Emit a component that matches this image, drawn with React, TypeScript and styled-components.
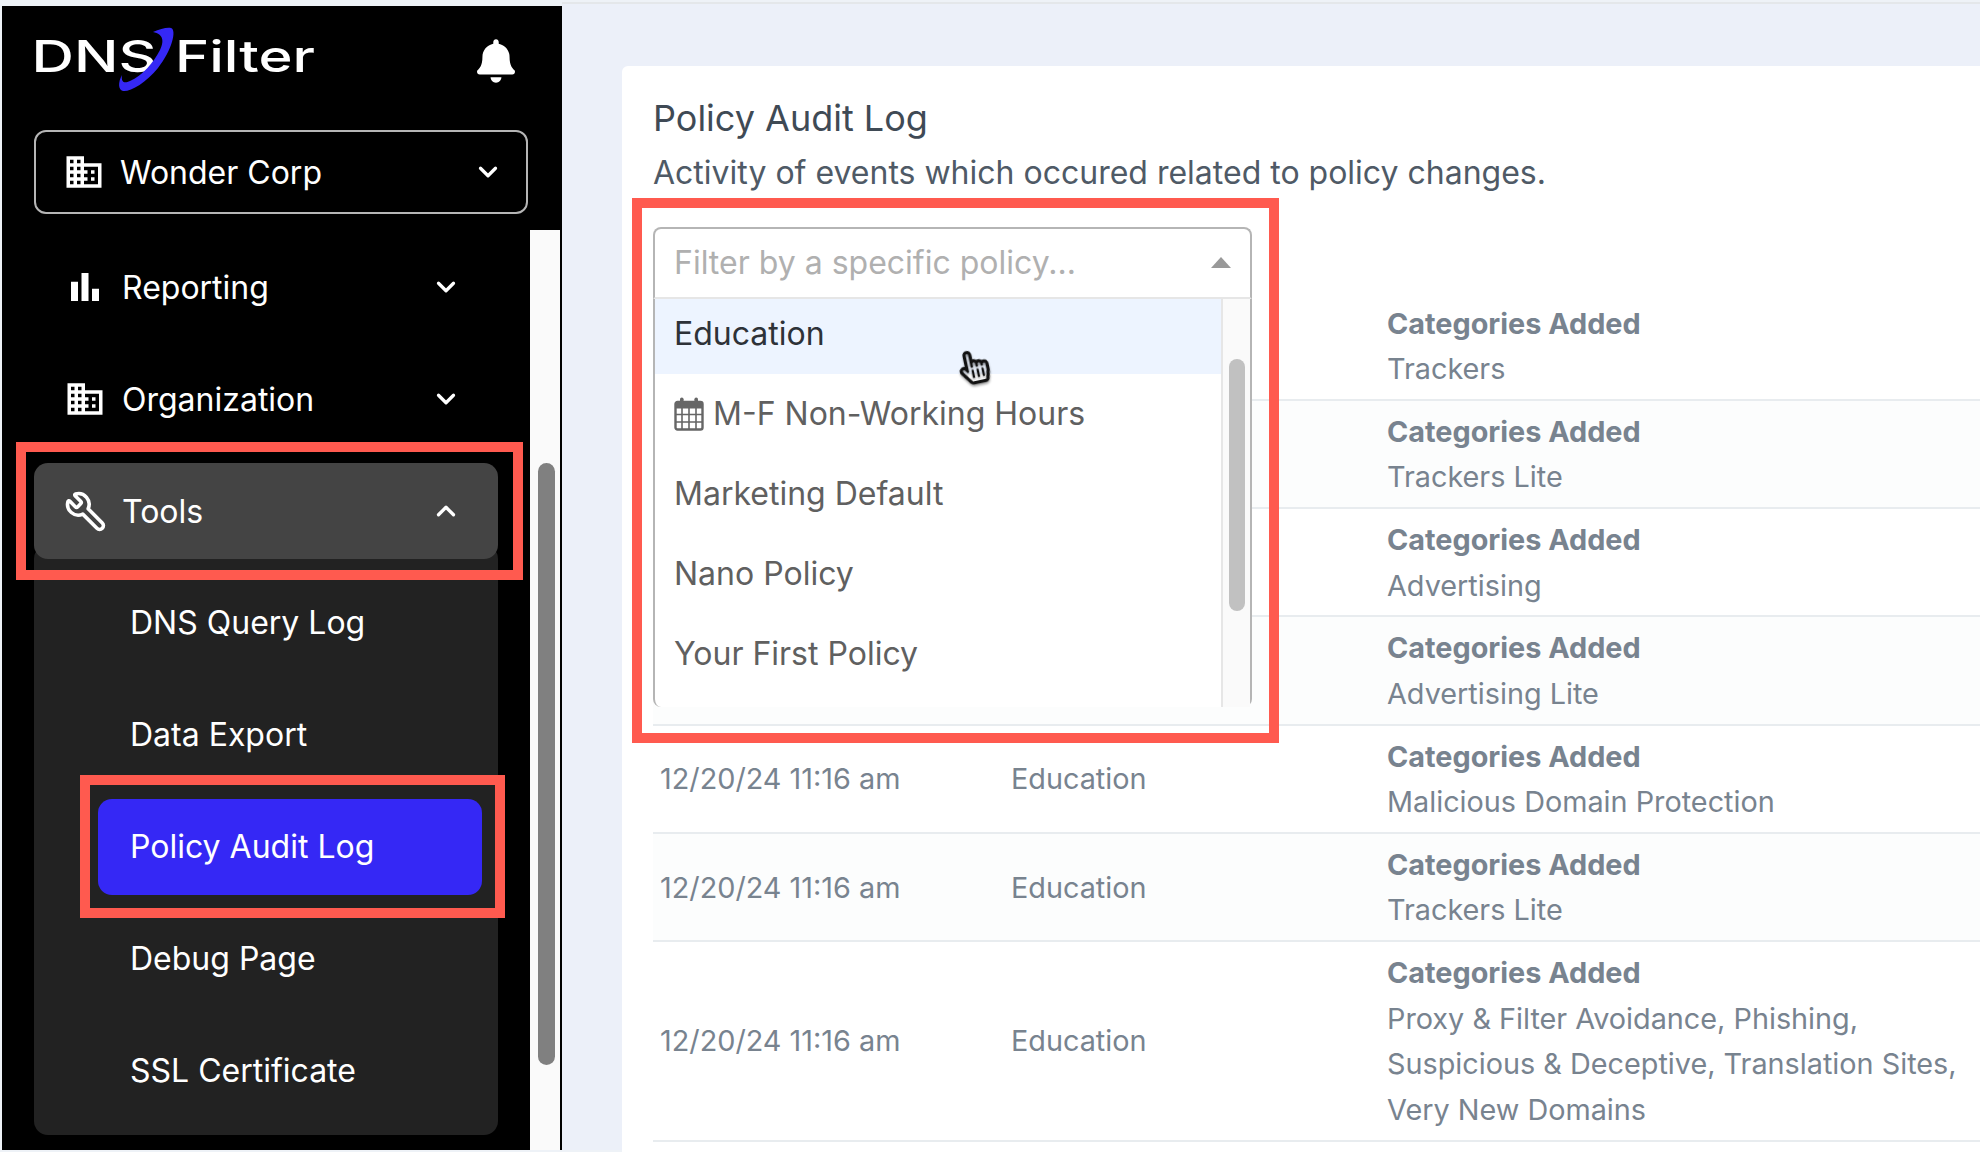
import { Fragment } from "react"
import styled, { createGlobalStyle } from "styled-components"
import { ChevronDown, ChevronUp, Wrench } from "lucide-react"
import { FaBell, FaRegHandPointer } from "react-icons/fa"
import { MdBarChart, MdDomain } from "react-icons/md"

const GlobalStyle = createGlobalStyle`
  html, body {
    margin: 0;
    height: 100%;
    overflow: hidden;
    background: #eef2f7;
    font-family: Inter, "Liberation Sans", sans-serif;
  }
`

const Page = styled.div`
  display: flex;
  width: 1980px;
  height: 1152px;
  box-sizing: border-box;
  padding: 6px 0 2px 2px;
  overflow: hidden;
`

const Sidebar = styled.aside`
  display: flex;
  flex-direction: column;
  flex: none;
  width: 558px;
  background: #000;
  border-right: 2px solid #000;
  color: #fff;
`

const SidebarHeader = styled.div`
  display: flex;
  align-items: flex-start;
  justify-content: space-between;
  height: 124px;
  padding: 20px 45px 0 26px;
  box-sizing: border-box;
  flex: none;
`

const BellIcon = styled(FaBell)`
  width: 38px;
  height: 46px;
  margin-top: 12px;
`

const OrgSelect = styled.div`
  display: flex;
  align-items: center;
  height: 84px;
  margin: 0 32px;
  padding: 0 23px 0 27px;
  box-sizing: border-box;
  border: 2px solid #b5b5b5;
  border-radius: 12px;
  font-size: 32px;
  flex: none;
  width: 494px;
`

const OrgName = styled.span`
  flex: 1;
  margin-left: 15px;
`

const NavArea = styled.div`
  display: flex;
  flex: 1;
  margin-top: 16px;
  min-height: 0;
`

const Nav = styled.nav`
  flex: 1;
  padding: 1px 32px 0;
  min-width: 0;
`

const NavRow = styled.div<{ $open?: boolean }>`
  position: relative;
  display: flex;
  align-items: center;
  height: 96px;
  padding: 0 37px 0 26px;
  border-radius: 14px;
  font-size: 32px;
  background: ${({ $open }) => ($open ? "#444444" : "transparent")};
  margin-top: ${({ $open }) => ($open ? "0" : "8px")};
  margin-bottom: ${({ $open }) => ($open ? "0" : "16px")};
`

const NavIcon = styled.span`
  display: flex;
  justify-content: center;
  width: 50px;
  margin-right: 12px;
`

const NavLabel = styled.span`
  flex: 1;
`

const FlippedWrench = styled(Wrench)`
  transform: scaleX(-1);
`

const SubMenu = styled.div`
  display: flex;
  flex-direction: column;
  background: #222222;
  border-radius: 14px;
  padding: 21.5px 0 8.5px;
  margin-top: -14px;
`

const SubItem = styled.div<{ $active?: boolean }>`
  position: relative;
  display: flex;
  align-items: center;
  height: 96px;
  margin: 8px 16px 8px 64px;
  padding-left: 32px;
  border-radius: 14px;
  font-size: 32px;
  background: ${({ $active }) => ($active ? "#3528f5" : "transparent")};
`

const Highlight = styled.span<{ $inset: string }>`
  position: absolute;
  inset: ${({ $inset }) => $inset};
  border: 10px solid #ff5a4f;
  pointer-events: none;
  z-index: 3;
`

const ScrollTrack = styled.div`
  position: relative;
  flex: none;
  width: 30px;
  background: #fafafa;
`

const ScrollThumb = styled.div`
  position: absolute;
  top: 233px;
  left: 8px;
  width: 17px;
  height: 602px;
  border-radius: 9px;
  background: #808080;
`

const Content = styled.main`
  flex: 1;
  min-width: 0;
  padding: 62px 0 0 60px;
  background: #ecf0f9;
  border-top: 2px solid #e4e7ea;
  margin-top: -4px;
`

const Card = styled.section`
  height: 100%;
  padding: 27px 0 0 31px;
  background: #fff;
  border-radius: 6px 0 0 0;
  color: #78838f;
`

const Title = styled.h1`
  margin: 0;
  font-size: 36px;
  font-weight: 400;
  line-height: 50px;
  color: #3f4a55;
`

const Subtitle = styled.p`
  margin: 5px 0 0;
  font-size: 32px;
  line-height: 50px;
  color: #4f5a66;
`

const FilterWrap = styled.div`
  position: relative;
  height: 66px;
  margin-top: 28.5px;
`

const FilterBox = styled.div`
  position: absolute;
  top: 0;
  left: 0;
  width: 599px;
  z-index: 2;
  background: #fff;
  border-radius: 8px;
`

const Outline = styled.span`
  position: absolute;
  inset: -29px -27px -36px -21px;
  border: 10px solid #ff5a4f;
  pointer-events: none;
`

const SelectControl = styled.div`
  display: flex;
  align-items: center;
  justify-content: space-between;
  height: 72px;
  padding: 0 19px;
  box-sizing: border-box;
  border: 2px solid #b5b5b5;
  border-bottom-color: #e6e6e6;
  border-radius: 8px 8px 0 0;
  font-size: 32px;
  color: #b0b0b0;
`

const Caret = styled.span`
  width: 0;
  height: 0;
  border-left: 10px solid transparent;
  border-right: 10px solid transparent;
  border-bottom: 11px solid #999;
`

const Menu = styled.div`
  position: relative;
  display: flex;
  height: 408px;
  box-sizing: border-box;
  border: 2px solid #b5b5b5;
  border-top: 0;
  border-bottom: 0;
  border-radius: 0 0 8px 8px;
  background: #fff;
`

const OptionList = styled.div`
  flex: 1;
`

const Option = styled.div<{ $hover?: boolean }>`
  display: flex;
  align-items: center;
  gap: 9px;
  height: 80px;
  padding: 0 19px;
  box-sizing: border-box;
  font-size: 32px;
  color: ${({ $hover }) => ($hover ? "#2e3238" : "#606060")};
  background: ${({ $hover }) => ($hover ? "#edf4ff" : "transparent")};

  &:first-child {
    height: 75px;
    padding-bottom: 5px;
  }
`

const MenuTrack = styled.div`
  position: relative;
  flex: none;
  width: 29px;
  background: #fafafa;
  border-left: 2px solid #e6e6e6;
  box-sizing: border-box;
`

const MenuThumb = styled.div`
  position: absolute;
  top: 60px;
  left: 6px;
  width: 16px;
  height: 252px;
  border-radius: 8px;
  background: #c1c1c1;
`

const Cursor = styled(FaRegHandPointer)`
  position: absolute;
  top: 50px;
  left: 304px;
  width: 30px;
  height: 36px;
  color: #111;
  transform: rotate(-12deg);
  filter: drop-shadow(0 2px 1px rgba(0, 0, 0, 0.35));
`

const TableRow = styled.div<{ $striped?: boolean }>`
  display: grid;
  grid-template-columns: 351px 376px 1fr;
  align-items: center;
  box-sizing: border-box;
  padding: 8px 0 7.5px 7px;
  border-bottom: 2px solid #e8ecef;
  background: ${({ $striped }) => ($striped ? "#fcfdfd" : "#fff")};
  font-size: 28.8px;
  line-height: 45.4px;
`

const ChangeTitle = styled.div`
  font-weight: 700;
`

// the first four rows sit under the open dropdown, only their last column shows
const logs = [
  { covered: true, value: ["Trackers"] },
  { covered: true, value: ["Trackers Lite"] },
  { covered: true, value: ["Advertising"] },
  { covered: true, value: ["Advertising Lite"] },
  { value: ["Malicious Domain Protection"] },
  { value: ["Trackers Lite"] },
  {
    value: [
      "Proxy & Filter Avoidance, Phishing,",
      "Suspicious & Deceptive, Translation Sites,",
      "Very New Domains",
    ],
  },
]

const LogoMark = () => (
  <svg width="296" height="76" viewBox="-6 0 296 76" fill="none">
    <text
      x="-2.5"
      y="46"
      fill="#fff"
      fontFamily="Inter, sans-serif"
      fontSize="44"
      fontWeight="500"
      textLength="125"
      lengthAdjust="spacingAndGlyphs"
    >
      DNS
    </text>
    <text
      x="141"
      y="46"
      fill="#fff"
      fontFamily="Inter, sans-serif"
      fontSize="44"
      fontWeight="500"
      textLength="140"
      lengthAdjust="spacingAndGlyphs"
    >
      Filter
    </text>
    <path
      d="M119 6C126 3 133 1 137 2C143 4 138 24 124 42C112 57 96 66 89 65C84 64 84 56 88 49C87 56 90 58 96 55C108 50 120 36 126 24C130 16 130 8 119 6Z"
      fill="#3528f5"
    />
  </svg>
)

const CalendarIcon = () => (
  <svg width="30" height="34" viewBox="0 0 30 34" fill="none">
    <rect x="1.5" y="5" width="27" height="27.5" rx="2" fill="#fff" stroke="#666" strokeWidth="2.4" />
    <rect x="1.5" y="5" width="27" height="6.5" fill="#666" />
    <path d="M1.5 17.5H28.5M1.5 25H28.5M8 11V32M15 11V32M22 11V32" stroke="#666" strokeWidth="1.6" />
    <rect x="6" y="0.5" width="3.6" height="8" rx="1.8" fill="#666" />
    <rect x="20.4" y="0.5" width="3.6" height="8" rx="1.8" fill="#666" />
  </svg>
)

export default function App() {
  return (
    <Fragment>
      <GlobalStyle />
      <Page>
        <Sidebar>
          <SidebarHeader>
            <LogoMark />
            <BellIcon />
          </SidebarHeader>
          <OrgSelect>
            <MdDomain size={42} />
            <OrgName>Wonder Corp</OrgName>
            <ChevronDown size={30} strokeWidth={2.6} />
          </OrgSelect>
          <NavArea>
            <Nav>
              <NavRow>
                <NavIcon>
                  <MdBarChart size={42} />
                </NavIcon>
                <NavLabel>Reporting</NavLabel>
                <ChevronDown size={30} strokeWidth={2.6} />
              </NavRow>
              <NavRow>
                <NavIcon>
                  <MdDomain size={42} />
                </NavIcon>
                <NavLabel>Organization</NavLabel>
                <ChevronDown size={30} strokeWidth={2.6} />
              </NavRow>
              <NavRow $open>
                <Highlight $inset="-21px -25px -21px -18px" />
                <NavIcon>
                  <FlippedWrench size={43} strokeWidth={2} />
                </NavIcon>
                <NavLabel>Tools</NavLabel>
                <ChevronUp size={30} strokeWidth={2.6} />
              </NavRow>
              <SubMenu>
                <SubItem>DNS Query Log</SubItem>
                <SubItem>Data Export</SubItem>
                <SubItem $active>
                  <Highlight $inset="-24px -23px -23px -18px" />
                  Policy Audit Log
                </SubItem>
                <SubItem>Debug Page</SubItem>
                <SubItem>SSL Certificate</SubItem>
              </SubMenu>
            </Nav>
            <ScrollTrack>
              <ScrollThumb />
            </ScrollTrack>
          </NavArea>
        </Sidebar>
        <Content>
          <Card>
            <Title>Policy Audit Log</Title>
            <Subtitle>Activity of events which occured related to policy changes.</Subtitle>
            <FilterWrap>
              <FilterBox>
                <Outline />
                <SelectControl>
                  Filter by a specific policy...
                  <Caret />
                </SelectControl>
                <Menu>
                  <OptionList>
                    <Option $hover>Education</Option>
                    <Option>
                      <CalendarIcon />
                      M-F Non-Working Hours
                    </Option>
                    <Option>Marketing Default</Option>
                    <Option>Nano Policy</Option>
                    <Option>Your First Policy</Option>
                  </OptionList>
                  <MenuTrack>
                    <MenuThumb />
                  </MenuTrack>
                  <Cursor />
                </Menu>
              </FilterBox>
            </FilterWrap>
            {logs.map((log, i) => (
              <TableRow key={i} $striped={i % 2 === 1}>
                <div>{!log.covered && "12/20/24 11:16 am"}</div>
                <div>{!log.covered && "Education"}</div>
                <div>
                  <ChangeTitle>Categories Added</ChangeTitle>
                  {log.value.map((line) => (
                    <div key={line}>{line}</div>
                  ))}
                </div>
              </TableRow>
            ))}
          </Card>
        </Content>
      </Page>
    </Fragment>
  )
}
